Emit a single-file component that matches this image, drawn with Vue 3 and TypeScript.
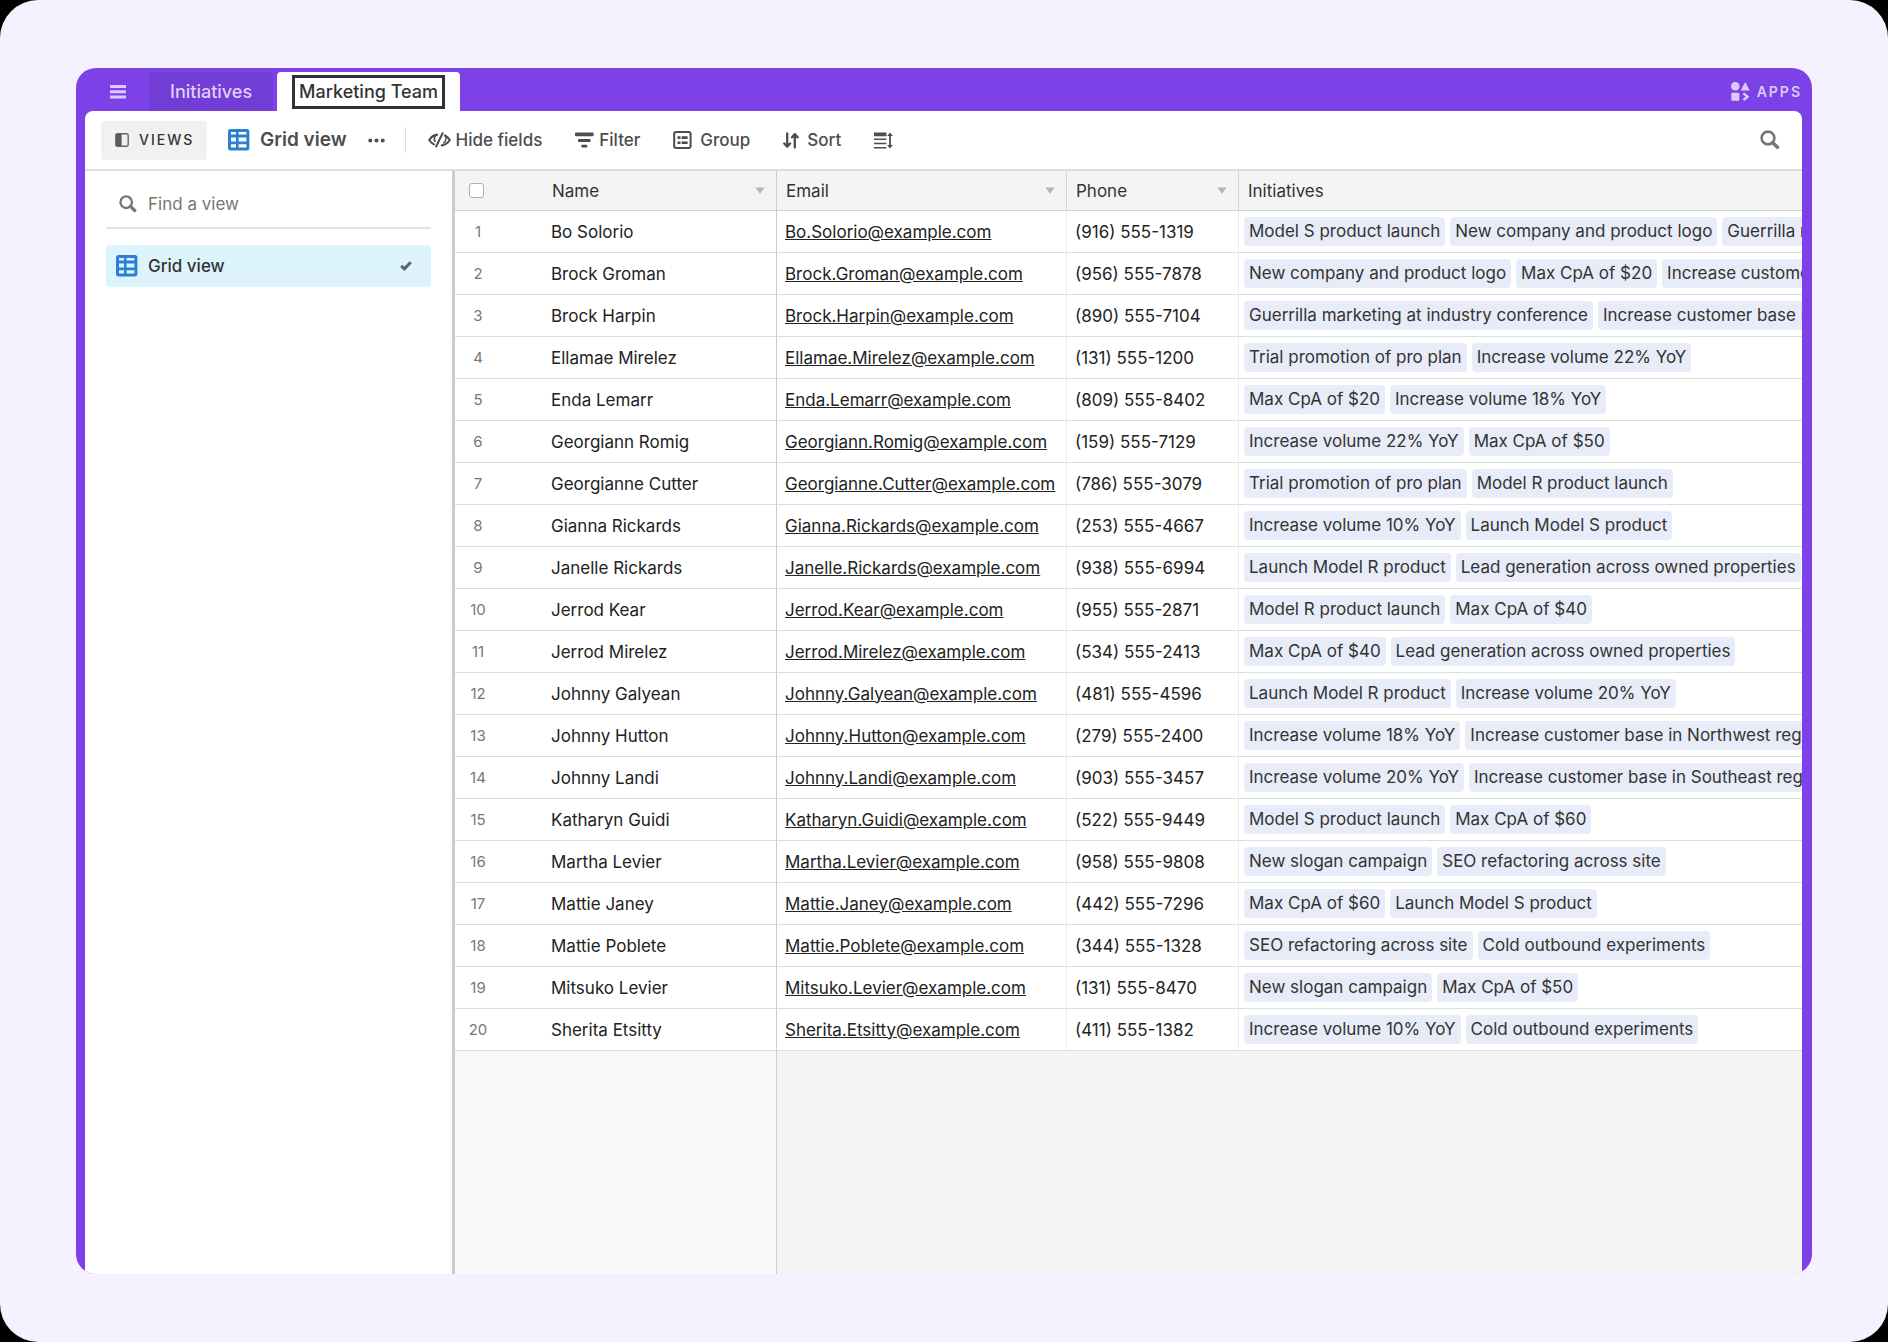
<script setup lang="ts">
import { ref } from 'vue'

interface Person {
  name: string
  email: string
  phone: string
  initiatives: string[]
}

const person = (name: string, phone: string, ...initiatives: string[]): Person => ({
  name,
  email: `${name.replace(' ', '.')}@example.com`,
  phone,
  initiatives,
})

const people: Person[] = [
  person('Bo Solorio', '(916) 555-1319', 'Model S product launch', 'New company and product logo', 'Guerrilla marketing at industry conference'),
  person('Brock Groman', '(956) 555-7878', 'New company and product logo', 'Max CpA of $20', 'Increase customer base in Northwest region'),
  person('Brock Harpin', '(890) 555-7104', 'Guerrilla marketing at industry conference', 'Increase customer base in Southeast region'),
  person('Ellamae Mirelez', '(131) 555-1200', 'Trial promotion of pro plan', 'Increase volume 22% YoY'),
  person('Enda Lemarr', '(809) 555-8402', 'Max CpA of $20', 'Increase volume 18% YoY'),
  person('Georgiann Romig', '(159) 555-7129', 'Increase volume 22% YoY', 'Max CpA of $50'),
  person('Georgianne Cutter', '(786) 555-3079', 'Trial promotion of pro plan', 'Model R product launch'),
  person('Gianna Rickards', '(253) 555-4667', 'Increase volume 10% YoY', 'Launch Model S product'),
  person('Janelle Rickards', '(938) 555-6994', 'Launch Model R product', 'Lead generation across owned properties'),
  person('Jerrod Kear', '(955) 555-2871', 'Model R product launch', 'Max CpA of $40'),
  person('Jerrod Mirelez', '(534) 555-2413', 'Max CpA of $40', 'Lead generation across owned properties'),
  person('Johnny Galyean', '(481) 555-4596', 'Launch Model R product', 'Increase volume 20% YoY'),
  person('Johnny Hutton', '(279) 555-2400', 'Increase volume 18% YoY', 'Increase customer base in Northwest region'),
  person('Johnny Landi', '(903) 555-3457', 'Increase volume 20% YoY', 'Increase customer base in Southeast region'),
  person('Katharyn Guidi', '(522) 555-9449', 'Model S product launch', 'Max CpA of $60'),
  person('Martha Levier', '(958) 555-9808', 'New slogan campaign', 'SEO refactoring across site'),
  person('Mattie Janey', '(442) 555-7296', 'Max CpA of $60', 'Launch Model S product'),
  person('Mattie Poblete', '(344) 555-1328', 'SEO refactoring across site', 'Cold outbound experiments'),
  person('Mitsuko Levier', '(131) 555-8470', 'New slogan campaign', 'Max CpA of $50'),
  person('Sherita Etsitty', '(411) 555-1382', 'Increase volume 10% YoY', 'Cold outbound experiments'),
]

const query = ref('')
const allSelected = ref(false)
</script>

<template>
  <div class="stage">
    <div class="app">
      <header class="topbar">
        <button class="menu" type="button" aria-label="Menu">
          <svg width="16" height="14" viewBox="0 0 16 14" fill="currentColor"><path d="M0 0h16v3H0zM0 5.3h16v3H0zM0 10.6h16v3H0z" /></svg>
        </button>
        <nav class="tabs">
          <a class="tab" href="#initiatives">Initiatives</a>
          <a class="tab active" href="#marketing"><span class="focus">Marketing Team</span></a>
        </nav>
        <button class="apps" type="button">
          <svg width="19" height="19" viewBox="0 0 19 19" fill="currentColor">
            <circle cx="4.3" cy="4.3" r="4.3" />
            <path d="M14.2 0l4.5 8.4h-9z" />
            <rect x="0.3" y="10.8" width="8" height="8" rx="0.8" />
            <path d="M12.4 11.4l4.2 3.3-4.2 3.3" fill="none" stroke="currentColor" stroke-width="2.4" />
          </svg>
          APPS
        </button>
      </header>

      <main class="base">
        <div class="toolbar">
          <button class="views" type="button">
            <svg width="14" height="14" viewBox="0 0 14 14">
              <rect x="0.8" y="0.8" width="12.4" height="12.4" rx="1.6" fill="none" stroke="#666" stroke-width="1.4" />
              <path d="M1 1h5.6v12H1z" fill="#5c5c5c" />
            </svg>
            VIEWS
          </button>
          <button class="current" type="button">
            <svg width="22" height="22" viewBox="0 0 22 22">
              <rect width="21.4" height="21.4" rx="2.6" fill="#2d7fd0" />
              <path d="M3 3h5v2.4H3zM10.6 3h7.8v2.4h-7.8zM3 8.6h5v3.8H3zM10.6 8.600h7.800v3.800h-7.800zM3 15.200h5v3.200H3zM10.600 15.200h7.800v3.200h-7.800z" fill="#fff" />
            </svg>
            Grid view
          </button>
          <button class="more" type="button" aria-label="View options">
            <svg width="17" height="5" viewBox="0 0 17 5" fill="currentColor"><circle cx="2.3" cy="2.5" r="2" /><circle cx="8.5" cy="2.5" r="2" /><circle cx="14.7" cy="2.5" r="2" /></svg>
          </button>
          <span class="divider"></span>
          <div class="tools">
            <button type="button">
              <svg width="23" height="16" viewBox="0 0 23 16" fill="none" stroke="currentColor" stroke-width="2.1" stroke-linecap="round">
                <path d="M9 2.6C5.8 3.1 3.2 5 1.2 8c1.3 2 2.9 3.500 4.700 4.400M14.600 1.300L8.200 14.400M17 3.500c1.900.9 3.500 2.400 4.800 4.500-2 3.100-4.700 5-8 5.400" />
                <path d="M9 2.600c-2.300 1.500-3.300 4.300-2 6.800M17.200 3.600c1.200 2.200.9 5.400-1.400 7.300" stroke-width="1.6" />
              </svg>
              Hide fields
            </button>
            <button type="button">
              <svg width="19" height="16" viewBox="0 0 19 16" fill="currentColor"><rect y="0.6" width="18.6" height="3.6" rx="1" /><rect x="3" y="7" width="12.6" height="3" rx="1" /><rect x="6.3" y="12.7" width="6" height="2.8" rx="1" /></svg>
              Filter
            </button>
            <button class="spaced" type="button">
              <svg width="19" height="18" viewBox="0 0 19 18">
                <rect x="1.2" y="1" width="16.4" height="16" rx="2" fill="none" stroke="currentColor" stroke-width="2" />
                <path d="M4.500 5.300h3v2.600h-3zM8.600 5.300h6v2.600h-6zM4.500 10.400h3V13h-3zM8.600 10.400h6V13h-6z" fill="currentColor" />
              </svg>
              Group
            </button>
            <button class="spaced" type="button">
              <svg width="16" height="17" viewBox="0 0 16 17" fill="none" stroke="currentColor" stroke-width="2.3" stroke-linejoin="round" stroke-linecap="round">
                <path d="M4.200 1.500v13M1.300 11.400l2.900 3.300 2.900-3.300M11.800 15.500v-13M8.900 5.400l2.900-3.300 2.900 3.300" />
              </svg>
              Sort
            </button>
            <button type="button" aria-label="Row height">
              <svg width="19" height="17" viewBox="0 0 19 17" fill="currentColor">
                <path d="M0 .6h12.400v3.600H0zM0 6.600h12.400v1.400H0zM0 10.800h12.400v1.400H0zM0 15h12.400v1.400H0z" />
                <path d="M16 .4l2.900 3.600h-2v9h2L16 16.600 13.100 13h2V4h-2z" />
              </svg>
            </button>
          </div>
          <button class="search" type="button" aria-label="Search records">
            <svg width="20" height="20" viewBox="0 0 20 20" fill="none" stroke="currentColor"><circle cx="8" cy="8" r="6.4" stroke-width="2.6" /><path d="M12.700 12.700l4.800 4.500" stroke-width="3.6" stroke-linecap="round" /></svg>
          </button>
        </div>

        <div class="body">
          <aside class="sidebar">
            <label class="find">
              <svg width="18" height="18" viewBox="0 0 20 20" fill="none" stroke="currentColor"><circle cx="8" cy="8" r="6.4" stroke-width="2.6" /><path d="M12.700 12.700l4.800 4.500" stroke-width="3.6" stroke-linecap="round" /></svg>
              <input v-model="query" type="text" placeholder="Find a view" aria-label="Find a view" />
            </label>
            <button class="view-item" type="button">
              <svg width="22" height="22" viewBox="0 0 22 22">
                <rect width="21.4" height="21.4" rx="2.6" fill="#2d7fd0" />
                <path d="M3 3h5v2.4H3zM10.6 3h7.8v2.4h-7.8zM3 8.6h5v3.8H3zM10.6 8.600h7.800v3.800h-7.800zM3 15.200h5v3.200H3zM10.600 15.200h7.800v3.200h-7.800z" fill="#ddf4fd" />
              </svg>
              <span>Grid view</span>
              <svg class="check" width="12" height="10" viewBox="0 0 12 10" fill="none" stroke="#606669" stroke-width="3"><path d="M1.200 4.900l3.200 3L10.700 1.300" /></svg>
            </button>
          </aside>

          <section class="grid">
            <table>
              <colgroup>
                <col class="c-num" /><col class="c-name" /><col class="c-email" /><col class="c-phone" /><col />
              </colgroup>
              <thead>
                <tr>
                  <th class="num"><input v-model="allSelected" type="checkbox" aria-label="Select all records" /></th>
                  <th class="name"><div class="head">Name<button type="button" aria-label="Name field options"><svg width="10" height="7" viewBox="0 0 10 7"><path d="M.5.5h9L5 6.700z" fill="#b4b4b4" /></svg></button></div></th>
                  <th><div class="head">Email<button type="button" aria-label="Email field options"><svg width="10" height="7" viewBox="0 0 10 7"><path d="M.5.5h9L5 6.700z" fill="#b4b4b4" /></svg></button></div></th>
                  <th><div class="head">Phone<button type="button" aria-label="Phone field options"><svg width="10" height="7" viewBox="0 0 10 7"><path d="M.5.5h9L5 6.700z" fill="#b4b4b4" /></svg></button></div></th>
                  <th>Initiatives</th>
                </tr>
              </thead>
              <tbody>
                <tr v-for="(p, i) in people" :key="p.email">
                  <td class="num">{{ i + 1 }}</td>
                  <td class="name">{{ p.name }}</td>
                  <td><a :href="`mailto:${p.email}`">{{ p.email }}</a></td>
                  <td>{{ p.phone }}</td>
                  <td class="links">
                    <div class="chips"><span v-for="item in p.initiatives" :key="item" class="chip">{{ item }}</span></div>
                  </td>
                </tr>
              </tbody>
            </table>
            <div class="rest"><div class="rest-left"></div></div>
          </section>
        </div>
      </main>
    </div>
  </div>
</template>

<style>
body {
  background: #000;
}
</style>

<style scoped>
.stage,
.stage * {
  box-sizing: border-box;
}
.stage {
  display: flex;
  min-height: 100vh;
  padding: 68px 76px;
  border-radius: 38px;
  background: #f5f1ff;
  color: #222;
  font-family: Inter, "Liberation Sans", sans-serif;
  font-size: 17px;
  line-height: 20px;
}
button,
input {
  margin: 0;
  padding: 0;
  border: 0;
  background: none;
  color: inherit;
  font: inherit;
}
button {
  display: flex;
  align-items: center;
  white-space: nowrap;
  cursor: pointer;
}
svg {
  display: block;
  flex: none;
}
.app {
  display: flex;
  flex: 1;
  flex-direction: column;
  min-width: 0;
  padding: 0 10px 0 9px;
  overflow: hidden;
  border-radius: 20px;
  background: #7c42e8;
}
.topbar {
  display: flex;
  align-items: flex-end;
  height: 43px;
}
.menu {
  height: 39px;
  margin-left: 25px;
  color: #dccbfa;
}
.tabs {
  display: flex;
  gap: 4px;
  margin-left: 23px;
}
.tab {
  display: flex;
  align-items: center;
  height: 39px;
  padding: 0 21px;
  border-radius: 4px 4px 0 0;
  background: #723cd6;
  color: #e0d0fb;
  font-size: 18px;
  font-weight: 500;
  text-decoration: none;
  white-space: nowrap;
}
.tab.active {
  padding: 0 15px;
  background: #fff;
  color: #333;
}
.focus {
  padding: 4px;
  border: 3px solid #333;
  line-height: 20px;
}
.apps {
  gap: 7px;
  height: 39px;
  margin-left: auto;
  color: #dccbfa;
  font-size: 14px;
  font-weight: 600;
  letter-spacing: 2px;
}
.base {
  display: flex;
  flex: 1;
  flex-direction: column;
  overflow: hidden;
  border-radius: 8px 8px 0 0;
  background: #fff;
}
.toolbar {
  display: flex;
  align-items: center;
  height: 60px;
  padding: 0 22px 0 16px;
  border-bottom: 2px solid #dedede;
  color: #4d4d4d;
}
.views {
  gap: 10px;
  width: 106px;
  height: 39px;
  padding-left: 14px;
  border-radius: 4px;
  background: #f1f1f1;
  color: #333;
  font-size: 14px;
  font-weight: 500;
  letter-spacing: 2px;
}
.current {
  gap: 10px;
  margin-left: 21px;
  font-size: 19px;
  font-weight: 600;
  line-height: 22px;
}
.more {
  margin-left: 21px;
}
.divider {
  width: 1px;
  height: 26px;
  margin: 0 22px 0 20px;
  background: #ddd;
}
.tools {
  display: flex;
  gap: 33px;
}
.tools button {
  gap: 5px;
  font-weight: 500;
}
.tools .spaced {
  gap: 8px;
}
.search {
  margin-left: auto;
  color: #777;
}
.body {
  display: flex;
  flex: 1;
}
.sidebar {
  flex: none;
  width: 370px;
  padding: 9px 21px;
  border-right: 3px solid #ccc;
}
.find {
  display: flex;
  align-items: center;
  gap: 11px;
  height: 49px;
  padding-left: 13px;
  border-bottom: 2px solid #e2e2e2;
  color: #777;
}
.find input {
  flex: 1;
  min-width: 0;
  outline: 0;
}
.find input::placeholder {
  color: #777;
  opacity: 1;
}
.view-item {
  gap: 10px;
  width: 100%;
  height: 42px;
  margin-top: 16px;
  padding: 0 19px 0 10px;
  border-radius: 4px;
  background: #ddf4fd;
  color: #333;
  font-weight: 500;
}
.check {
  margin-left: auto;
}
.grid {
  display: flex;
  flex: 1;
  flex-direction: column;
  min-width: 0;
}
table {
  width: 100%;
  table-layout: fixed;
  border-collapse: separate;
  border-spacing: 0;
}
.c-num {
  width: 46px;
}
.c-name {
  width: 276px;
}
.c-email {
  width: 290px;
}
.c-phone {
  width: 172px;
}
th,
td {
  height: 42px;
  padding: 0 8px;
  overflow: hidden;
  border-right: 1px solid #ececec;
  border-bottom: 1px solid #dedede;
  text-align: left;
  white-space: nowrap;
}
th {
  height: 40px;
  padding: 0 11px 0 9px;
  border-color: #d4d4d4;
  background: #f4f4f4;
  color: #333;
  font-weight: 400;
}
th:last-child,
td:last-child,
.num {
  border-right: 0;
}
.num {
  padding: 0;
  color: #777;
  font-size: 15px;
  text-align: center;
}
td.name {
  padding-left: 50px;
  border-right-color: #ccc;
}
th.name {
  padding-left: 51px;
  border-right-color: #ccc;
}
.head {
  display: flex;
  align-items: center;
  justify-content: space-between;
}
.num input {
  display: block;
  width: 15px;
  height: 15px;
  margin: 0 auto 0 14px;
  border: 1px solid #a9afb8;
  border-radius: 3px;
  appearance: none;
  background: #fff;
}
td a {
  color: inherit;
  text-decoration: underline;
}
td.links {
  padding: 0 0 0 5px;
}
.chips {
  display: flex;
  gap: 5px;
}
.chip {
  flex: none;
  padding: 0 5px;
  border-radius: 4px;
  background: #e8ecf8;
  color: #333;
  line-height: 29px;
}
.rest {
  display: flex;
  flex: 1;
  background: #f4f4f4;
}
.rest-left {
  width: 322px;
  border-right: 1px solid #ccc;
  background: #f9f9f9;
}
</style>
